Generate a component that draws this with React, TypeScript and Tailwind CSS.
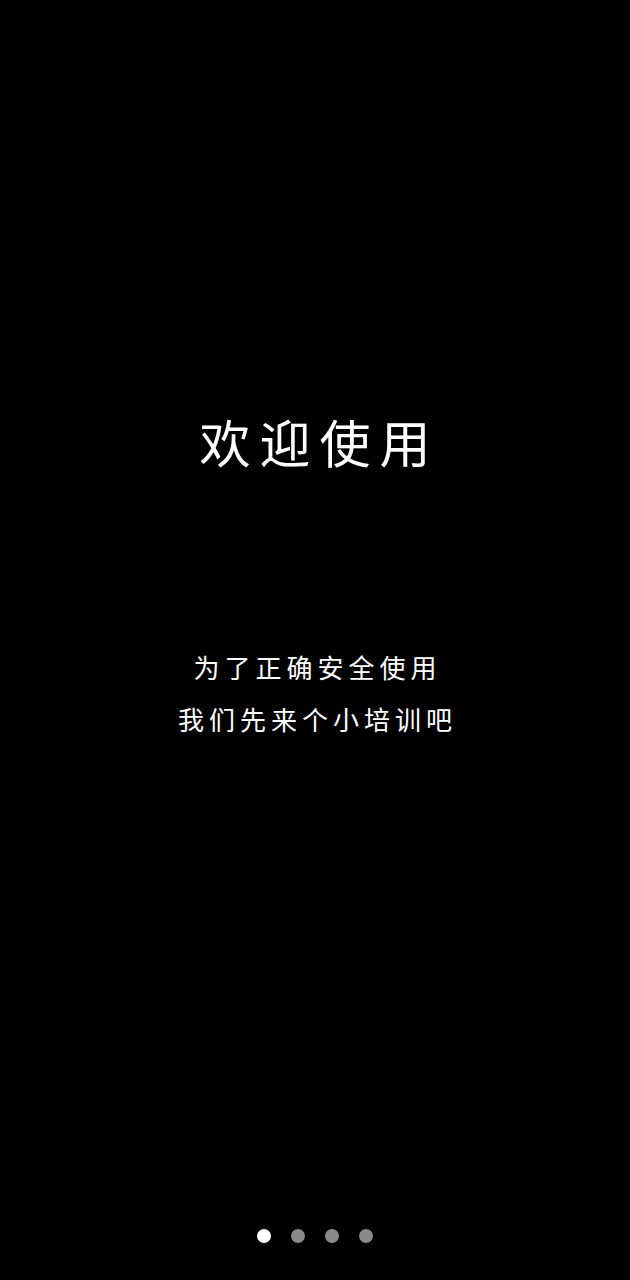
export default function App() {
  const dots = [true, false, false, false];
  return (
    <div
      className="w-full h-[1280px] bg-black text-white flex flex-col items-center"
      style={{ fontFamily: '"Noto Sans CJK SC", "Noto Sans", sans-serif' }}
    >
      <h1 className="mt-[413px] text-[51px] leading-[56px] tracking-[9px] pl-[9px]">欢迎使用</h1>
      <div className="mt-[172px] text-[26px] leading-[52px] tracking-[5px] pl-[5px] text-center">
        <p>为了正确安全使用</p>
        <p>我们先来个小培训吧</p>
      </div>
      <div className="mt-auto mb-[37px] flex gap-[20px]">
        {dots.map((on, i) => (
          <span
            key={i}
            className={`w-[14px] h-[14px] rounded-full ${on ? 'bg-white' : 'bg-[#8a8a8a]'}`}
          />
        ))}
      </div>
    </div>
  );
}
